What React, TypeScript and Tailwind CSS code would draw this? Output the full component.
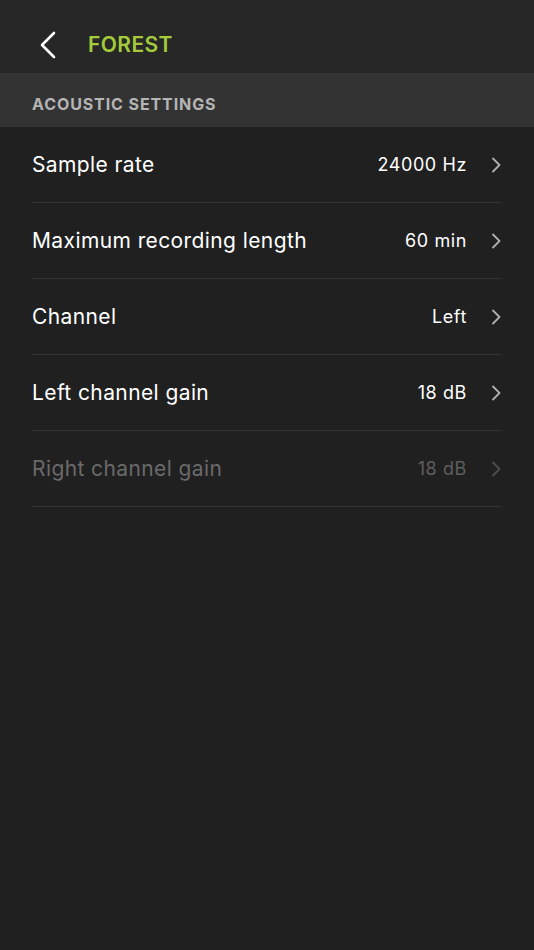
import React from 'react';

type Row = { label: string; value: string; disabled?: boolean };

const rows: Row[] = [
  { label: 'Sample rate', value: '24000 Hz' },
  { label: 'Maximum recording length', value: '60 min' },
  { label: 'Channel', value: 'Left' },
  { label: 'Left channel gain', value: '18 dB' },
  { label: 'Right channel gain', value: '18 dB', disabled: true },
];

const Chevron: React.FC<{ className?: string }> = ({ className = '' }) => (
  <svg width="11" height="16" viewBox="0 0 11 16" fill="none" className={className}>
    <path d="M2 1.5 L8.5 8 L2 14.5" stroke="currentColor" strokeWidth="1.8" strokeLinecap="round" strokeLinejoin="round" />
  </svg>
);

export default function App() {
  return (
    <div
      className="w-[534px] h-[950px] bg-[#202020] flex flex-col"
      style={{ fontFamily: 'Inter, "Noto Sans", sans-serif' }}
    >
      {/* top bar */}
      <div className="h-[73px] bg-[#272727] flex items-center pt-[16px] pl-[38px]">
        <svg width="20" height="28" viewBox="0 0 20 28" fill="none" className="text-white">
          <path d="M16 2 L4 14 L16 26" stroke="currentColor" strokeWidth="2.6" strokeLinecap="round" strokeLinejoin="round" />
        </svg>
        <span className="ml-[30px] text-[21px] font-semibold text-[#a4cc3a] tracking-[0.4px]">FOREST</span>
      </div>

      {/* section header */}
      <div className="h-[54px] bg-[#333333] flex items-center pt-[8px] px-8">
        <span className="text-[16px] font-bold text-[#b5b5b5] tracking-[0.9px]">ACOUSTIC SETTINGS</span>
      </div>

      {/* rows */}
      <div className="px-8">
        {rows.map((r) => (
          <div
            key={r.label}
            className="h-[76px] flex items-center border-b border-[#333333]"
          >
            <span className={`text-[21px] tracking-[0.4px] ${r.disabled ? 'text-[#6a6a6a]' : 'text-white'}`}>{r.label}</span>
            <span className={`ml-auto text-[18px] tracking-[0.6px] ${r.disabled ? 'text-[#5e5e5e]' : 'text-white'}`}>{r.value}</span>
            <Chevron className={`ml-[24px] ${r.disabled ? 'text-[#505050]' : 'text-[#b0b0b0]'}`} />
          </div>
        ))}
      </div>
    </div>
  );
}
